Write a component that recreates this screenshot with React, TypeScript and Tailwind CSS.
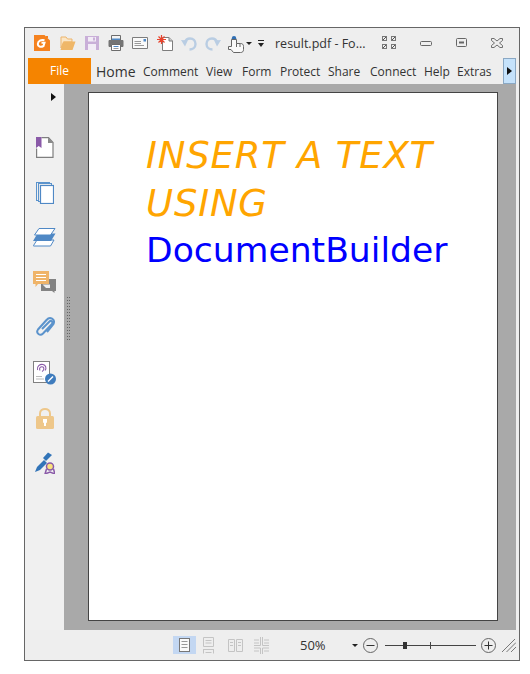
import React from "react";

const Svg = ({ w, h, className = "", children }: { w: number; h: number; className?: string; children: React.ReactNode }) => (
  <svg width={w} height={h} viewBox={`0 0 ${w} ${h}`} className={`block shrink-0 ${className}`}>{children}</svg>
);

const Logo = () => (
  <Svg w={16} h={16}>
    <path d="M0 0H12.500L16 3.500V16H0Z" fill="#f5821f" />
    <path d="M10.500 0H13L16 3V6H13.500L10.500 3Z" fill="#f5821f" />
    <path d="M10.500 0L16 5.500V0Z" fill="#eeeeee" />
    <path d="M12 1H14V3H12Z" fill="#f5821f" />
    <path d="M10.500 5.200C7 4.200 4 6 3.800 9C3.700 11.500 6.500 12.600 9.500 11L10.500 7.800H7.500" fill="none" stroke="#fff" strokeWidth="2" />
  </Svg>
);
const Folder = () => (
  <Svg w={16} h={15}>
    <path d="M1 1H6L7.500 3H12V6H3.500L1 12Z" fill="#fbe6c6" stroke="#edb56c" />
    <path d="M0.500 14L3.500 5.500H15.500L12.500 14Z" fill="#efb769" />
  </Svg>
);
const Save = () => (
  <Svg w={14} h={14}>
    <path d="M0 0H14V14H0Z" fill="#c9afd8" />
    <path d="M3 1H11V5.500H3Z" fill="#f2ecf6" />
    <path d="M3 8H11V14H3Z" fill="#f2ecf6" />
    <path d="M8 1.500H10V4.500H8Z" fill="#c9afd8" />
  </Svg>
);
const Printer = () => (
  <Svg w={16} h={16}>
    <path d="M3.500 0.500H12.500V5H3.500Z" fill="#f4f4f4" stroke="#6c6c6c" />
    <path d="M4 3.500H12V5.500H4Z" fill="#4f88c5" />
    <path d="M1 5.500H15V11.500H12.500V9H3.500V11.500H1Z" fill="#747474" stroke="#747474" />
    <path d="M3.500 9.500H12.500V15.500H3.500Z" fill="#fff" stroke="#6c6c6c" />
    <path d="M5.500 11.500H10.500" stroke="#4f88c5" />
    <path d="M5.500 13.500H10.500" stroke="#9a9a9a" />
  </Svg>
);
const Mail = () => (
  <Svg w={16} h={12}>
    <path d="M0.500 0.500H15.500V11.500H0.500Z" fill="#fafafa" stroke="#7d7d7d" />
    <path d="M11.500 2H14V4.500H11.500Z" fill="#4f88c5" />
    <path d="M2.500 4.500H9M2.500 6.500H9M2.500 8.500H12" stroke="#9a9a9a" />
  </Svg>
);
const NewDoc = () => (
  <Svg w={16} h={16}>
    <path d="M5.500 2.500H12L15.500 6V15.500H5.500Z" fill="#fff" stroke="#7d7d7d" />
    <path d="M12 2.500V6H15.500" fill="#ccc" stroke="#7d7d7d" />
    <path d="M4.500 0V9M0 4.500H9M1.500 1.500L7.500 7.500M7.500 1.500L1.500 7.500" stroke="#e8432d" strokeWidth="1.200" />
  </Svg>
);
const Undo = ({ flip = false }: { flip?: boolean }) => (
  <Svg w={16} h={15} className={flip ? "-scale-x-100" : ""}>
    <path d="M3.500 7C4.500 4 6.500 2.500 9 2.500C12.500 2.500 14.500 5 14.500 8C14.500 11.500 11.500 13.500 8.500 13.500" fill="none" stroke="#b9cde3" strokeWidth="2.400" />
    <path d="M0 4L6.800 4.500L4 10.500Z" fill="#b9cde3" />
  </Svg>
);
const Hand = () => (
  <Svg w={16} h={17}>
    <circle cx="6" cy="2.200" r="2.200" fill="#2f6fb4" />
    <path d="M3.500 10V3.500H8.500V7.500H12.500C14.500 7.500 15.500 8.500 15.500 10.500V13.500C15.500 15.500 14.500 16.500 12.500 16.500H5.500L3 13.500H0.500V10.500H3.500Z" fill="#fafafa" stroke="#666" />
    <path d="M8.500 7.500V11M12 7.500V11" stroke="#666" />
  </Svg>
);
const Caret = () => (
  <Svg w={6} h={3}><path d="M0 0H6L3 3Z" fill="#222" /></Svg>
);
const Customize = () => (
  <Svg w={6} h={8}>
    <path d="M0 0.500H6" stroke="#222" />
    <path d="M0 3H6L3 7Z" fill="#222" />
  </Svg>
);
const Fullscreen = () => (
  <Svg w={14} h={13}>
    {[[0, 0], [9, 0], [0, 8], [9, 8]].map(([x, y]) => (
      <g key={`${x}-${y}`}>
        <rect x={x + 0.5} y={y + 0.5} width="4" height="4" fill="none" stroke="#777" />
        <path d={`M${x + 1} ${y + 4}L${x + 4} ${y + 1}`} stroke="#555" />
      </g>
    ))}
  </Svg>
);
const Minimize = () => (
  <Svg w={12} h={5}><rect x="0.500" y="0.500" width="11" height="4" rx="1" fill="none" stroke="#666" /></Svg>
);
const Maximize = () => (
  <Svg w={11} h={9}>
    <rect x="0.500" y="0.500" width="10" height="8" rx="1" fill="none" stroke="#666" />
    <path d="M3 4.500H8" stroke="#666" strokeWidth="2" />
  </Svg>
);
const Close = () => (
  <Svg w={12} h={10}>
    <path d="M0.500 0.500H3L6 3L9 0.500H11.500V2.500L8.500 5L11.500 7.500V9.500H9L6 7L3 9.500H0.500V7.500L3.500 5L0.500 2.500Z" fill="none" stroke="#6f6f6f" />
  </Svg>
);

const Bookmarks = () => (
  <Svg w={18} h={21}>
    <path d="M5.500 0.600H12.500L17 5.500V20.400H0.600V11.500" fill="#fff" stroke="#7f7f7f" strokeWidth="1.200" />
    <path d="M12 0.500L17.500 6H12Z" fill="#8a8a8a" />
    <path d="M0 0H5.500V11L2.700 9L0 11Z" fill="#8a5aa8" />
  </Svg>
);
const Pages = () => (
  <Svg w={18} h={22}>
    <rect x="0.500" y="0.500" width="13" height="18" fill="#f0f0f0" stroke="#5b93cc" />
    <rect x="2.500" y="1.500" width="13" height="18" fill="#f0f0f0" stroke="#5b93cc" />
    <rect x="4.500" y="3.500" width="13" height="18" fill="#fff" stroke="#4f88c5" strokeWidth="1.200" />
  </Svg>
);
const Layers = () => (
  <Svg w={23} h={19}>
    <path d="M0.500 17.500L4 12H21L17.500 18H0.500Z" fill="#fff" stroke="#4f88c5" />
    <path d="M4.500 5.500H22.500L18 13H0Z" fill="#4f88c5" />
    <path d="M6 0.500H22L17.500 7H1.500Z" fill="#fff" stroke="#4f88c5" />
  </Svg>
);
const Comments = () => (
  <Svg w={23} h={23}>
    <path d="M8 8H23V20H21.500V22L19 20H8Z" fill="#838383" />
    <path d="M9.500 13.500H17V17H13Z" fill="#f0f0f0" />
    <path d="M0 0H16V13H5L2.500 16V13H0Z" fill="#efb469" />
    <path d="M3 3.500H13M3 6.500H13M3 9.500H13" stroke="#fff" strokeWidth="1.200" />
  </Svg>
);
const Clip = () => (
  <Svg w={20} h={23}>
    <path d="M7 13L14.500 5.500C16 4 18.500 6 17 8L8 17.500C5 20.500 0.500 17 3 13.500L11.500 4C15 0 20.500 3 18.500 8L12 16" fill="none" stroke="#5b93cc" strokeWidth="2" />
  </Svg>
);
const Sign = () => (
  <Svg w={23} h={24}>
    <rect x="0.500" y="0.500" width="16" height="21" fill="#fff" stroke="#808080" />
    <path d="M4.500 9C3.500 5 7 3 10 3.500C12.500 4 14 7 12 9.500M7 9.500C5.500 7 8 5 10 6C11.500 7 11 9.500 9 10.500" fill="none" stroke="#8a5aa8" strokeWidth="1.100" />
    <path d="M3 15.500H9M3 18H11" stroke="#bbb" />
    <circle cx="17.500" cy="18" r="5.500" fill="#3f7cbd" />
    <path d="M15 20.500L20 15.500" stroke="#fff" strokeWidth="1.500" />
  </Svg>
);
const Lock = () => (
  <Svg w={18} h={22}>
    <path d="M4 10V6.500C4 0.500 14 0.500 14 6.500V10" fill="none" stroke="#eec78a" strokeWidth="2" />
    <rect x="0" y="9" width="18" height="13" rx="1.500" fill="#eec78a" />
    <path d="M7 12H11V15.500L10 16V19H8V16L7 15.500Z" fill="#fff" />
  </Svg>
);
const Cert = () => (
  <Svg w={20} h={22}>
    <path d="M0 20L2 15L9 8L12 11L5 18Z" fill="#3274b8" />
    <path d="M8 6L13 0.500L17 3L11 9Z" fill="#3274b8" />
    <circle cx="15" cy="14.500" r="3.500" fill="#fbe27c" stroke="#8a5aa8" strokeWidth="1.500" />
    <path d="M11.500 17L10 22L15 20L20 22L18.500 17" fill="none" stroke="#8a5aa8" strokeWidth="1.500" />
  </Svg>
);

const Grip = () => (
  <Svg w={3} h={44}>
    {Array.from({ length: 15 }).map((_, i) => (
      <g key={i}>
        <rect x="0" y={i * 3} width="1" height="1" fill="#666" />
        <rect x="2" y={i * 3} width="1" height="1" fill="#666" />
      </g>
    ))}
  </Svg>
);

const PageSingle = () => (
  <Svg w={11} h={14}>
    <rect x="0.500" y="0.500" width="10" height="13" fill="#fbfbfb" stroke="#777" />
    <path d="M2.500 3.500H8.500M2.500 6.500H8.500M2.500 9.500H8.500" stroke="#999" />
  </Svg>
);
const PageCont = () => (
  <Svg w={11} h={17}>
    <path d="M0.500 0.500H10.500V9.500H0.500Z" fill="none" stroke="#c4c4c4" />
    <path d="M2.500 3.500H8.500M2.500 6H8.500M0 12.500H11M0.500 12.500V16.500M10.500 12.500V16.500M2.500 15.500H8.500" stroke="#c4c4c4" />
  </Svg>
);
const PageFacing = () => (
  <Svg w={15} h={13}>
    <path d="M0.500 0.500H6.500V12.500H0.500ZM8.500 0.500H14.500V12.500H8.500Z" fill="none" stroke="#c4c4c4" />
    <path d="M2 3.500H5M2 6.500H5M10 3.500H13M10 6.500H13" stroke="#c4c4c4" />
  </Svg>
);
const PageFacingCont = () => (
  <Svg w={15} h={17}>
    <path d="M6.500 0V8.500H0M8.500 0V8.500H15M0 3H5M0 6H5M10 3H15M10 6H15M0 11H6.500V17M15 11H8.500V17M0 14H5M10 14H15" fill="none" stroke="#c4c4c4" />
  </Svg>
);
const CircleBtn = ({ plus = false }: { plus?: boolean }) => (
  <Svg w={15} h={15}>
    <circle cx="7.500" cy="7.500" r="7" fill="none" stroke="#666" />
    <path d={plus ? "M3.500 7.500H11.500M7.500 3.500V11.500" : "M3.500 7.500H11.500"} stroke="#333" />
  </Svg>
);
const Resize = () => (
  <Svg w={14} h={13}>
    <path d="M0 13L13 0M4.500 13L14 3.500M9 13L14 8" stroke="#777" />
  </Svg>
);

const tabs: [string, string][] = [
  ["Comment", "w-[55px] ml-[8px]"],
  ["View", "w-[28px] ml-[8px]"],
  ["Form", "w-[30px] ml-[8px]"],
  ["Protect", "w-[40px] ml-[8px]"],
  ["Share", "w-[34px] ml-[8px]"],
  ["Connect", "w-[46px] ml-[8px]"],
  ["Help", "w-[24px] ml-[8px]"],
  ["Extras", "w-[36px] ml-[9px]"],
];

const sideIcons = [Bookmarks, Pages, Layers, Comments, Clip, Sign, Lock, Cert];

export default function App() {
  return (
    <div className="w-[530px] h-[674px] bg-white pt-[27px] pl-[24px] font-['Open_Sans','Noto_Sans',sans-serif] overflow-hidden">
      <div className="w-[496px] h-[634px] border border-[#666] bg-[#eeeeee] flex flex-col">
        {/* title bar */}
        <div className="h-[30px] shrink-0 flex items-center pl-[9px] text-[#333]">
          <Logo />
          <div className="ml-[10px]"><Folder /></div>
          <div className="ml-[9px]"><Save /></div>
          <div className="ml-[9px]"><Printer /></div>
          <div className="ml-[8px]"><Mail /></div>
          <div className="ml-[9px]"><NewDoc /></div>
          <div className="ml-[8px]"><Undo /></div>
          <div className="ml-[8px]"><Undo flip /></div>
          <div className="ml-[7px] mt-[2px]"><Hand /></div>
          <div className="ml-[2px]"><Caret /></div>
          <div className="ml-[6px] mt-[1px]"><Customize /></div>
          <span className="ml-[11px] mt-[3px] w-[93px] whitespace-nowrap text-[12.500px] leading-none">result.pdf - Fo...</span>
          <div className="ml-[14px] -mt-[1px]"><Fullscreen /></div>
          <div className="ml-[24px] mt-[1px]"><Minimize /></div>
          <div className="ml-[24px] -mt-[2px]"><Maximize /></div>
          <div className="ml-[24px] -mt-[1px]"><Close /></div>
        </div>
        {/* ribbon tabs */}
        <div className="h-[26px] shrink-0 flex items-center pl-[3px] text-[#333] text-[12px]">
          <div className="w-[63px] h-full bg-[#f58400] text-white flex items-center justify-center">File</div>
          <span className="ml-[5px] mt-[1px] w-[39px] text-[14px] whitespace-nowrap">Home</span>
          {tabs.map(([t, c]) => (
            <span key={t} className={`${c} mt-[1px] whitespace-nowrap`}>{t}</span>
          ))}
          <div className="ml-[10px] w-[13px] h-full bg-[#c5e2fb] border border-[#8aa8c4] flex items-center justify-center">
            <div className="w-0 h-0 border-y-[4px] border-y-transparent border-l-[5px] border-l-[#111]" />
          </div>
        </div>
        {/* main */}
        <div className="flex-1 min-h-0 flex">
          <div className="w-[39px] shrink-0 bg-[#f0f0f0] flex flex-col items-center">
            <div className="h-[26px] w-full flex items-center justify-end pr-[8px]">
              <div className="w-0 h-0 border-y-[4px] border-y-transparent border-l-[5px] border-l-[#111]" />
            </div>
            <div className="mt-[15px] flex flex-col">
              {sideIcons.map((I, i) => (
                <div key={i} className="h-[45px] flex items-center justify-center"><I /></div>
              ))}
            </div>
          </div>
          <div className="relative w-[452px] bg-[#a9a9a9] pt-[8px] pl-[24px]">
            <div className="absolute left-[3px] top-[213px]"><Grip /></div>
            <div className="w-[410px] h-[529px] bg-white border border-[#444] pt-[39px] pl-[57px] font-['DejaVu_Sans',sans-serif]">
              <div className="italic text-[#ffa500] w-[340px] text-[37px] leading-[48px] tracking-[0.8px]">INSERT A TEXT USING</div>
              <div className="text-[#0000ff] text-[34.600px] leading-[44px]">DocumentBuilder</div>
            </div>
          </div>
        </div>
        {/* status bar */}
        <div className="h-[30px] shrink-0 flex items-center pl-[148px] text-[#333]">
          <div className="w-[23px] h-[18px] bg-[#c3d7f2] flex items-center justify-center"><PageSingle /></div>
          <div className="ml-[7px]"><PageCont /></div>
          <div className="ml-[14px]"><PageFacing /></div>
          <div className="ml-[11px]"><PageFacingCont /></div>
          <span className="ml-[31px] w-[26px] text-[13px] leading-none">50%</span>
          <div className="ml-[26px]"><Caret /></div>
          <div className="ml-[5px]"><CircleBtn /></div>
          <div className="ml-[7px] relative w-[91px] h-[15px] flex items-center">
            <div className="w-full h-px bg-[#444]" />
            <div className="absolute left-[18px] top-[4px] w-[4px] h-[7px] bg-[#333]" />
            <div className="absolute left-[45px] top-[4px] w-px h-[7px] bg-[#444]" />
          </div>
          <div className="ml-[5px]"><CircleBtn plus /></div>
          <div className="ml-[6px]"><Resize /></div>
        </div>
      </div>
    </div>
  );
}
